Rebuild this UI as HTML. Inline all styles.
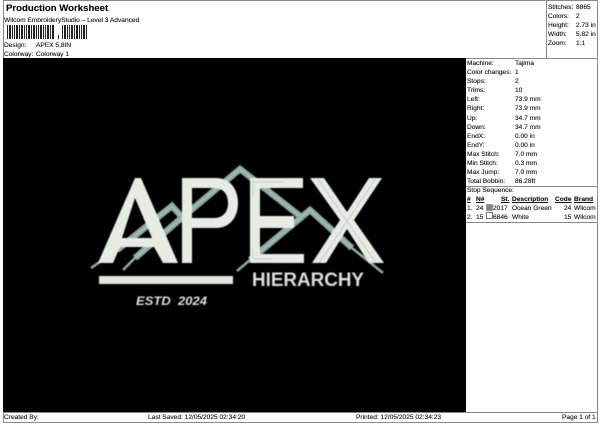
<!DOCTYPE html>
<html><head><meta charset="utf-8"><style>
html,body{margin:0;padding:0;background:#fff}
#p{position:relative;width:600px;height:424px;overflow:hidden;background:#fff;font-family:"Liberation Sans",sans-serif;font-size:6.6px;color:#111;line-height:9px;-webkit-text-stroke:0.12px #111}
#p span{position:absolute;white-space:nowrap}
.b{position:absolute;background:#8a8a8a}
svg text{-webkit-text-stroke:0}
</style></head><body><div id="p">
<div class="b" style="left:3px;top:0;width:595px;height:1px"></div>
<div class="b" style="left:3px;top:0;width:1px;height:423px"></div>
<div class="b" style="left:597px;top:0;width:1px;height:423px"></div>
<div class="b" style="left:3px;top:422px;width:595px;height:1px"></div>
<div class="b" style="left:546px;top:0;width:1px;height:58px"></div>
<div class="b" style="left:3px;top:58px;width:595px;height:1px"></div>
<div class="b" style="left:3px;top:412px;width:595px;height:1px"></div>
<div class="b" style="left:466px;top:186px;width:132px;height:1px"></div>
<div class="b" style="left:466px;top:222px;width:132px;height:1px"></div>

<span style="left:6px;top:3px;font-size:9.6px;font-weight:bold;color:#000;line-height:11px">Production Worksheet</span>
<span style="left:4px;top:16px">Wilcom EmbroideryStudio – Level 3 Advanced</span>
<svg style="position:absolute;left:7px;top:25px" width="82" height="16" fill="#222">
<path d="M0 0h1v14H0zM2 0h2v14H2zM5 0h1v14H5zM7 0h1v14H7zM9 0h2v14H9zM12 0h1v14h-1zM14 0h2v14h-2zM17 0h1v14h-1zM19 0h1v14h-1zM21 0h2v14h-2zM24 0h1v14h-1zM26 0h2v14h-2zM29 0h1v14h-1zM31 0h1v14h-1zM33 0h2v14h-2zM36 0h1v14h-1zM38 0h1v14h-1zM40 0h2v14h-2zM43 0h1v14h-1zM45 0h2v14h-2zM51 10h1v3l-1 2zM55 0h1v14h-1zM57 0h2v14h-2zM60 0h1v14h-1zM62 0h1v14h-1zM64 0h2v14h-2zM67 0h1v14h-1zM69 0h2v14h-2zM72 0h1v14h-1zM74 0h1v14h-1zM76 0h2v14h-2zM79 0h1v14h-1z"/>
</svg>
<span style="left:4px;top:41px">Design:</span><span style="left:36px;top:41px">APEX 5,8IN</span>
<span style="left:4px;top:50px">Colorway:</span><span style="left:36px;top:50px">Colorway 1</span>

<span style="left:548px;top:3px">Stitches:</span><span style="left:576px;top:3px">8865</span>
<span style="left:548px;top:12px">Colors:</span><span style="left:576px;top:12px">2</span>
<span style="left:548px;top:21px">Height:</span><span style="left:576px;top:21px">2.73 in</span>
<span style="left:548px;top:30px">Width:</span><span style="left:576px;top:30px">5.82 in</span>
<span style="left:548px;top:39px">Zoom:</span><span style="left:576px;top:39px">1:1</span>

<span style="left:467px;top:59px">Machine:</span><span style="left:515px;top:59px">Tajima</span>
<span style="left:467px;top:68px">Color changes:</span><span style="left:515px;top:68px">1</span>
<span style="left:467px;top:77px">Stops:</span><span style="left:515px;top:77px">2</span>
<span style="left:467px;top:86px">Trims:</span><span style="left:515px;top:86px">10</span>
<span style="left:467px;top:95.3px">Left:</span><span style="left:515px;top:95.3px">73.9 mm</span>
<span style="left:467px;top:104.4px">Right:</span><span style="left:515px;top:104.4px">73.9 mm</span>
<span style="left:467px;top:114px">Up:</span><span style="left:515px;top:114px">34.7 mm</span>
<span style="left:467px;top:123px">Down:</span><span style="left:515px;top:123px">34.7 mm</span>
<span style="left:467px;top:132px">EndX:</span><span style="left:515px;top:132px">0.00 in</span>
<span style="left:467px;top:141px">EndY:</span><span style="left:515px;top:141px">0.00 in</span>
<span style="left:467px;top:150px">Max Stitch:</span><span style="left:515px;top:150px">7.0 mm</span>
<span style="left:467px;top:159px">Min Stitch:</span><span style="left:515px;top:159px">0.3 mm</span>
<span style="left:467px;top:168px">Max Jump:</span><span style="left:515px;top:168px">7.0 mm</span>
<span style="left:467px;top:177px">Total Bobbin:</span><span style="left:515px;top:177px">86.28ft</span>
<span style="left:467px;top:186px">Stop Sequence:</span>
<span style="left:467px;top:195px;font-weight:bold;text-decoration:underline">#</span>
<span style="left:476px;top:195px;font-weight:bold;text-decoration:underline">N#</span>
<span style="left:501px;top:195px;font-weight:bold;text-decoration:underline">St.</span>
<span style="left:512px;top:195px;font-weight:bold;text-decoration:underline">Description</span>
<span style="left:555px;top:195px;font-weight:bold;text-decoration:underline">Code</span>
<span style="left:574px;top:195px;font-weight:bold;text-decoration:underline">Brand</span>
<span style="left:467px;top:204px">1.</span><span style="left:476px;top:204px">24</span>
<div style="position:absolute;left:486px;top:204px;width:5px;height:5px;background:#6f8d99;border:1px solid #999"></div>
<span style="left:493px;top:204px">2017</span><span style="left:512px;top:204px">Ocean Green</span><span style="left:564px;top:204px">24</span><span style="left:574px;top:204px">Wilcom</span>
<span style="left:467px;top:213px">2.</span><span style="left:476px;top:213px">15</span>
<div style="position:absolute;left:486px;top:212px;width:5px;height:5px;background:#fff;border:1px solid #777"></div>
<span style="left:493px;top:213px">6846</span><span style="left:512px;top:213px">White</span><span style="left:564px;top:213px">15</span><span style="left:574px;top:213px">Wilcom</span>

<span style="left:4px;top:413px">Created By:</span>
<span style="left:148px;top:413px">Last Saved: 12/05/2025 02:34:20</span>
<span style="left:356px;top:413px">Printed: 12/05/2025 02:34:23</span>
<span style="left:562px;top:413px">Page 1 of 1</span>

<svg style="position:absolute;left:3px;top:58px" width="463" height="354" viewBox="3 58 463 354">
<defs><filter id="s"><feGaussianBlur stdDeviation="0.45"/></filter></defs>
<rect x="3" y="58" width="463" height="354" fill="#000"/>
<g filter="url(#s)">
<g fill="none" stroke-linejoin="miter">
<g stroke="#8fa9a3" stroke-width="6.5">
<path d="M117 250L172 206L181 216"/>
<path d="M135 258L178 221L240 169L300 216"/>
<path d="M250 260L310 210L352 248"/>
</g>
<g stroke="#b4c6c0" stroke-width="1">
<path d="M117 250L172 206L181 216"/>
<path d="M135 258L178 221L240 169L300 216"/>
<path d="M250 260L310 210L352 248"/>
</g>
<g stroke="#8fa9a3" stroke-width="2.6">
<path d="M91 268L117 250M123 270L135 258M237 271L250 260M352 248L383 273"/>
</g>
</g>
<g fill="#e6ebe4">
<path d="M135 178H141L178 263H163L154 247H120L113 263H98ZM135 198L122 238H152Z" fill-rule="evenodd"/>
<path d="M182 178H216C230 178 238 189 238 203C238 217 230 228 216 228H192V263H182ZM192 188V218H214C223 218 228 212 228 203C228 194 223 188 214 188Z" fill-rule="evenodd"/>
<path d="M250 178H303V188H260V216H294V228H260V254H304V263H250Z"/>
<path d="M310 178H324L347 212L369 178H382L354 220L384 263H369L347 229L326 263H312L340 220Z"/>
<rect x="99" y="276" width="134" height="8" fill="#e1e5de"/>
</g>
<g stroke="#c2cac3" stroke-width="1" fill="none">
<path d="M317 178L376 263M376 178L319 263"/>
<path d="M253 182H284M253 182V195M253 258V248M253 259H272"/>
</g>
<text x="252" y="286" font-family="Liberation Sans" font-weight="bold" font-size="19" fill="#dcdfd9" textLength="112" lengthAdjust="spacingAndGlyphs">HIERARCHY</text>
<text x="136" y="305" font-family="Liberation Sans" font-weight="bold" font-style="italic" font-size="12" fill="#dcdfd9" xml:space="preserve" textLength="71" lengthAdjust="spacingAndGlyphs">ESTD  2024</text>
</g>
</svg>
</div></body></html>
